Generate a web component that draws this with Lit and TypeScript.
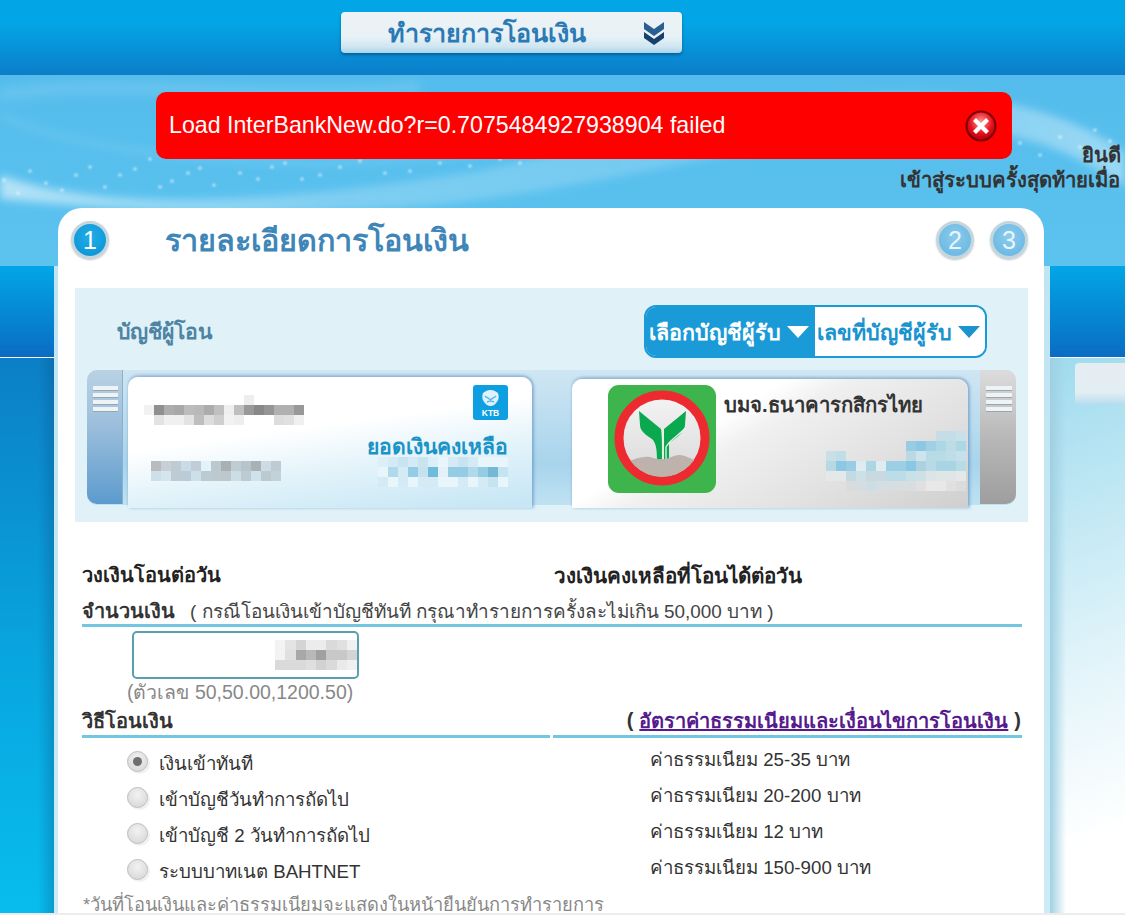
import { LitElement, html, css, svg } from "lit";
import { customElement, property } from "lit/decorators.js";

@customElement("pixel-blur")
class PixelBlur extends LitElement {
  @property({ type: Array }) rows: string[] = [];
  @property({ type: Number }) cell = 10;
  static styles = css`
    :host { display: block; }
    .grid { display: grid; }
    .px { display: block; }
  `;
  render() {
    const cols = this.rows[0]?.split(" ").length ?? 0;
    const cells = this.rows.flatMap((r) => r.split(" "));
    return html`<div class="grid" style="grid-template-columns:repeat(${cols},${this.cell}px);grid-auto-rows:10px">
      ${cells.map((c) => html`<span class="px" style="background:${c === "---" ? "transparent" : "#" + c}"></span>`)}
    </div>`;
  }
}

const chevrons = svg`<path d="M1 2 L11 9 L21 2 V9 L11 16 L1 9Z" fill="#2a5f92"/><path d="M1 12 L11 19 L21 12 V18 L11 25 L1 18Z" fill="#17416b"/>`;

const kbank = html`<svg class="kbank" viewBox="0 0 108 108" width="108" height="108">
  <defs>
    <linearGradient id="kb" x1="0" y1="0" x2="0" y2="1"><stop offset="0" stop-color="#f4f4f4"/><stop offset="1" stop-color="#d8d8d8"/></linearGradient>
    <clipPath id="kc"><circle cx="54" cy="53" r="39"/></clipPath>
  </defs>
  <rect width="108" height="108" rx="11" fill="#3db54c"/>
  <circle cx="54" cy="53" r="43" fill="url(#kb)" stroke="#ee2a31" stroke-width="9"/>
  <path d="M31 26 L53 44 C54 50 54 58 54 76 H49 C49 64 48 58 44 54 C38 50 32 46 32 40Z" fill="#0aa84f"/>
  <path d="M78 26 L56 44 V76 H61 V58 C66 54 77 48 77 40Z" fill="#0aa84f"/>
  <path d="M58 76 V62 C62 54 72 50 77 43" stroke="#e8f5e8" stroke-width="1.300" fill="none"/>
  <path d="M55 44 V76" stroke="#e8f5e8" stroke-width="1.300" fill="none"/>
  <path clip-path="url(#kc)" d="M15 78 C24 76 29 72 37 72 C43 71 47 75 54 74 C60 75 65 70 71 70 C78 70 84 75 93 77 V92 H15Z" fill="#bdb3ac"/>
</svg>`;

const ktb = html`<svg viewBox="0 0 35 35" width="35" height="35">
  <rect width="35" height="35" rx="3" fill="#0e9fe2"/>
  <path d="M17.5 5 C14 5 12 6.5 10 8 C9 11 9 14 10.500 16 C12 19 15 21 17.500 21 C20 21 23 19 24.500 16 C26 14 26 11 25 8 C23 6.500 21 5 17.500 5Z" fill="#dff2fb"/>
  <path d="M12 11 C14 13 16 13 17.500 15 C19 13 21 13 23 11 M14 17 C16 16 19 16 21 17" stroke="#58b8e6" stroke-width="1.400" fill="none"/>
  <text x="17.500" y="31" text-anchor="middle" font-family="Liberation Sans, sans-serif" font-size="8.500" font-weight="700" fill="#fff">KTB</text>
</svg>`;

const closeIcon = html`<svg viewBox="0 0 32 32" width="32" height="32">
  <defs><radialGradient id="cx" cx="0.5" cy="0.35" r="0.7"><stop offset="0" stop-color="#ff9a9a"/><stop offset="0.6" stop-color="#e8101a"/><stop offset="1" stop-color="#a80008"/></radialGradient></defs>
  <circle cx="16" cy="16" r="15.500" fill="#7a0005"/>
  <circle cx="16" cy="16" r="13.500" fill="url(#cx)"/>
  <path d="M11 8 L16 13 L21 8 L24 11 L19 16 L24 21 L21 24 L16 19 L11 24 L8 21 L13 16 L8 11Z" fill="#fff"/>
</svg>`;

const dots = [
  [4,105],[18,118],[30,96],[46,108],[62,115],[76,100],[90,92],[105,112],[120,100],[135,94],[150,84],[160,112],[172,106],[188,98],[200,93],[214,110],[225,78],[240,98],[258,104],[272,92],[285,88],[302,104],[320,100],[340,92],[360,86],[385,98],[410,96],[440,88],[470,91],[500,84],[520,88],[540,75],
  [1020,68],[1040,80],[1060,62],[1080,72],[1095,55],[1110,66],
];

const swoosh = html`<svg class="swoosh" viewBox="0 0 1125 191" width="1125" height="191">
  <defs>
    <linearGradient id="hz" x1="0" x2="1" y1="0" y2="0"><stop offset="0" stop-color="#fff" stop-opacity=".55"/><stop offset=".3" stop-color="#fff" stop-opacity=".22"/><stop offset=".7" stop-color="#fff" stop-opacity=".16"/><stop offset="1" stop-color="#fff" stop-opacity=".4"/></linearGradient>
    <filter id="sb" x="-5%" y="-20%" width="110%" height="140%"><feGaussianBlur stdDeviation="4"/></filter>
    <filter id="db"><feGaussianBlur stdDeviation=".8"/></filter>
  </defs>
  <g filter="url(#sb)">
    <path d="M0 100 C120 142 300 124 480 96 C640 60 760 24 880 20 C980 14 1070 36 1125 78 V112 C1060 64 980 46 880 54 C720 74 560 124 380 134 C220 144 90 132 0 124Z" fill="url(#hz)"/>
    <path d="M0 40 C60 70 200 90 340 88 C500 82 640 55 780 30" stroke="#fff" stroke-opacity=".2" stroke-width="3" fill="none"/>
    <path d="M0 20 C120 0 280 30 420 12" stroke="#fff" stroke-opacity=".1" stroke-width="14" fill="none"/>
  </g>
  <g fill="#fff" fill-opacity=".7" filter="url(#db)">
    ${dots.map(([x, y]) => svg`<circle cx=${x} cy=${y} r="1.600"/>`)}
  </g>
</svg>`;

const fees = ["ค่าธรรมเนียม 25-35 บาท", "ค่าธรรมเนียม 20-200 บาท", "ค่าธรรมเนียม 12 บาท", "ค่าธรรมเนียม 150-900 บาท"];
const methods = ["เงินเข้าทันที", "เข้าบัญชีวันทำการถัดไป", "เข้าบัญชี 2 วันทำการถัดไป", "ระบบบาทเนต BAHTNET"];

const M_NAME = [
  "--- --- --- --- --- --- --- --- --- --- eeeeee --- --- --- --- ---",
  "f2f2f2 8f8f8f adadad a8a8a8 bcbcbc b9b9b9 acacac c0c0c0 efefef bfbfbf 999999 888888 959595 b0b0b0 b0b0b0 989898",
  "--- e3e3e3 f0f0f0 f0f0f0 e3e3e3 bebebe dddddd cfcfcf f2f2f2 eeeeee --- --- --- dddddd e0e0e0 f0f0f0",
];
const M_ACC = [
  "b8bcbf c8d0d6 bfcbd2 cbdbe5 c0ccd6 e4f3fa bcc8d0 a8b0b4 c0ccd4 b8c4cc a8b2b4 ccdbe5 bfcbd4",
  "cddfe8 d3e6ee bccbd4 bcccd6 cddfe9 bccad2 bcc9cf bcc8ce cddde6 bccad1 cfe1ea bcc9d1 c3d1d8",
];
const M_BAL = [
  "dceef7 d4ebf5 c8e4f1 d4ebf5 c8e4f1 dceef7 e8f5fa d4ebf5 c8e4f1 d4ebf5 e8f5fa e8f5fa e8f5fa",
  "e8f5fa b0d9eb d4ebf5 94cce5 c4e2ef 6ebbdb e2f2f8 94cce5 94cce5 b0d9eb 94cce5 74b8d6 c4e4f1",
  "d4ebf5 e8f5fa d4ebf5 e8f5fa d4ebf5 d4ebf5 e8f5fa e8f5fa d4ebf5 e8f5fa d4ebf5 c6e3f0 e8f5fa",
];
const M_BANK = [
  "--- --- --- --- --- --- --- --- --- --- --- c4dde6 c4dde6 c8e0e8",
  "--- --- --- --- --- --- --- --- 99cce4 8cc8e4 a0d0e4 acd8e6 bcdce6 acd8e6",
  "c8dfe8 c0dde8 --- --- --- --- --- --- bcd8e2 cfe3ec b8dbe6 b8dbe6 bedde8 c4e0ea",
  "b8d8e4 8cc8e4 98cde4 dcecf0 acd6e6 e0ecf0 9ccee4 9ccee4 88c8e4 acd2e0 b8dae6 a8d4e4 a8d4e4 b8dce6",
  "e4e8e8 e4e8e8 c4dae2 cce0e6 c8dae0 c8dae0 bcdce8 bcdce8 c8e0e8 cce0e8 dce4e6 e0e6e6 e0e6e6 e4e8e8",
  "--- --- d8dcdc d4dee2 cddde2 d4dee2 d8dedf d8dedf d8dedf e0e0e0 e8e8e8 e8e8e8 e0e0e0 dcdcdc",
];
const M_INPUT = [
  "f3f3f3 e4e4e4 d4d4d4 ececec ececec dadada e0e0e0 f0f0f0",
  "f3f3f3 e0e0e0 a8a8a8 b8b8b8 a0a0a0 c8c8c8 c8c8c8 d4d4d4",
  "dadada dadada dadada dfdfdf d2d2d2 dadada eaeaea f0f0f0",
];

@customElement("app-root")
class AppRoot extends LitElement {
  static styles = css`
    :host {
      display: block; width: 1125px; height: 915px; overflow: hidden; position: relative;
      font-family: "Liberation Sans", Arial, sans-serif; color: #333;
      background:
        linear-gradient(#ececec, #ececec) 0 913px / 100% 2px no-repeat,
        linear-gradient(#bfe4f2, #cdebf5) 54px 266px / 4px 649px no-repeat,
        linear-gradient(#bfe4f2, #cdebf5) 1044px 266px / 6px 649px no-repeat,
        linear-gradient(90deg, transparent 70%, rgba(10, 70, 120, .28)) 0 358px / 54px 557px no-repeat,
        linear-gradient(#0c7fc6, #08a6e0 55%, #08bdee) 0 358px / 54px 557px no-repeat,
        linear-gradient(90deg, #9fd0e2, rgba(255,255,255,0) 16px) 1050px 358px / 75px 557px no-repeat,
        linear-gradient(160deg, #9fdbee, #e2f4fa 55%, #fff 85%) 1050px 358px / 75px 557px no-repeat,
        linear-gradient(#fff, #fff) 0 357px / 100% 2px no-repeat,
        linear-gradient(#02a6e6, #0a6cc4) 0 266px / 100% 91px no-repeat,
        linear-gradient(#54bcec, #5cc3ef) 0 75px / 100% 191px no-repeat;
    }
    .top {
      height: 75px; box-sizing: border-box; padding: 12px 0 0 341px;
      background: linear-gradient(#02a6e6 0, #02a6e6 30%, #0c7dc9 100%);
    }
    .menu {
      width: 341px; height: 41px; box-sizing: border-box; border-radius: 4px; padding: 0 17px 0 47px;
      display: flex; align-items: center; justify-content: space-between;
      background: linear-gradient(#edf3f7 0, #e8f1f5 60%, #cfe6f1 85%, #a9d4e8 100%);
      box-shadow: 0 2px 3px rgba(0, 40, 90, .45);
      font-size: 25.1px; font-weight: 700; color: #2b7ab5;
    }
    .menu svg { display: block; }
    .hero { position: relative; height: 133px; display: grid; }
    .swoosh { position: absolute; left: 0; top: 0; }
    .alert, .greet { grid-area: 1 / 1; position: relative; }
    .alert {
      margin: 17px 0 0 156px; width: 856px; height: 67px; box-sizing: border-box; padding: 0 15px 0 13px;
      background: #f00; border-radius: 10px; color: #fff; font-size: 23.2px;
      display: flex; align-items: center; justify-content: space-between;
    }
    .alert svg { display: block; }
    .greet { margin-top: 68px; font-size: 20.3px; font-weight: 700; color: #333; line-height: 25px; white-space: nowrap; }
    .greet div:nth-child(1) { padding-left: 1082px; }
    .greet div:nth-child(2) { padding-left: 900px; }
    .main { display: flex; align-items: flex-start; padding-left: 58px; }
    .card {
      flex: none; width: 986px; height: 705px; box-sizing: border-box; background: #fff;
      border-radius: 24px 24px 0 0; padding: 13px 16px 0 13px;
    }
    .steps { display: flex; align-items: center; height: 38px; }
    .step {
      width: 38px; height: 38px; box-sizing: border-box; border-radius: 50%; border: 3px solid #c3d6dd;
      display: flex; align-items: center; justify-content: center; flex: none;
      font-size: 25px; color: #e8f6fc;
      background: radial-gradient(circle at 50% 40%, #8ccbec, #62b4e2);
      box-shadow: 0 1px 2px rgba(0,0,0,.25);
    }
    .step.on { background: radial-gradient(circle at 50% 40%, #22aee8, #0890d4); color: #fff; }
    .step.two { margin-left: auto; }
    .step.three { margin-left: 16px; }
    .title { margin-left: 56px; font-size: 30.5px; font-weight: 700; color: #3f86b8; white-space: nowrap; }
    .panel { margin: 29px 0 0 4px; width: 953px; height: 234px; box-sizing: border-box; background: #e0f2f7; padding-top: 17px; }
    .pick { display: flex; align-items: center; height: 53px; padding-left: 42px; }
    .from { font-size: 21.2px; font-weight: 700; color: #4d84a4; }
    .seg {
      margin-left: auto; margin-right: 41px; width: 343px; height: 53px; box-sizing: border-box; display: flex;
      border: 2px solid #1a9ad6; border-radius: 12px; overflow: hidden; font-size: 21.5px; font-weight: 700;
    }
    .seg span { display: flex; align-items: center; gap: 6px; white-space: nowrap; }
    .seg .a { width: 169px; flex: none; background: #1a9ad6; color: #fff; padding-left: 3px; box-sizing: border-box; }
    .seg .b { flex: 1; background: #fff; color: #1a93cf; padding-left: 2px; }
    .tri { width: 0; height: 0; border: 11px solid transparent; border-bottom: 0; border-top: 12px solid currentColor; }
    .strip {
      margin: 12px 0 0 12px; width: 929px; height: 135px; display: flex; align-items: flex-start;
      background: linear-gradient(#cfe6f3, #a8d4ec 70%, #bfe2f2);
      border-radius: 10px;
    }
    .handle { width: 36px; height: 134px; flex: none; box-sizing: border-box; padding: 16px 4px 0 6px; }
    .handle.l { background: linear-gradient(#b9d2e4, #9dbfdc 40%, #5c9bce); border-radius: 10px 0 0 10px; border-right: 1px solid #8cb0c8; }
    .handle.r { background: linear-gradient(#dcdcdc, #b8b8b8 50%, #9e9e9e); border-radius: 0 10px 10px 0; margin-left: auto; }
    .handle i { display: block; height: 4px; margin-bottom: 2px; background: #eef3f6; border: solid #9aa6ad; border-width: 0 0 1px; }
    .acct {
      margin: 7px 0 0 5px; width: 404px; height: 131px; flex: none; box-sizing: border-box; border-radius: 10px 10px 0 0;
      background: linear-gradient(172deg, #fff 40%, #e3f3fa 65%, #c8e7f5 95%);
      box-shadow: 2px 0 3px rgba(90, 140, 190, .5), 0 -2px 3px rgba(90, 140, 190, .4);
      padding: 8px 24px 0 16px; display: flex; flex-direction: column;
    }
    .bank {
      margin: 9px 0 0 40px; width: 396px; height: 129px; flex: none; box-sizing: border-box; border-radius: 10px 10px 0 0;
      background: linear-gradient(150deg, #fff 35%, #f0f0f0 45%, #e2e2e2 70%, #cfcfcf 100%);
      box-shadow: 2px 0 3px rgba(90, 140, 190, .5), 0 -2px 3px rgba(90, 140, 190, .4);
      padding: 6px 2px 0 36px; display: flex; gap: 8px;
    }
    .ktb { align-self: flex-end; height: 35px; }
    .ktb svg { display: block; }
    .m1 { margin-top: -25px; }
    .bal { align-self: flex-end; margin-top: 10px; font-size: 21.1px; font-weight: 700; color: #1a93c6; line-height: 24px; position: relative; }
    .m4 { align-self: flex-end; margin-top: -2px; }
    .m2 { margin: -26px 0 0 7px; }
    .kbank { display: block; flex: none; }
    .bank-r { flex: 1; display: flex; flex-direction: column; }
    .bank-n { font-size: 20.3px; font-weight: 700; color: #333; line-height: 24px; margin-top: 8px; white-space: nowrap; }
    .m3 { align-self: flex-end; margin-top: 14px; }
    .form { margin: 0 0 0 11px; width: 940px; }
    .lim { display: flex; margin-top: 42px; height: 22px; align-items: center; font-weight: 700; color: #222; font-size: 20px; white-space: nowrap; }
    .lim span:last-child { margin-left: 214px; font-size: 20.6px; }
    .lim span:first-child { width: 258px; }
    .head { display: flex; align-items: center; border-bottom: 3px solid #73c6e0; height: 27px; margin-top: 11px; box-sizing: content-box; white-space: nowrap; }
    .head b { color: #333; font-size: 19.9px; }
    .head .note { margin-left: 15px; color: #444; font-size: 18.9px; }
    .amt { margin: 4px 0 0 50px; width: 227px; height: 48px; box-sizing: border-box; border: 2px solid #5a9fb0; border-radius: 5px; background: #fff; display: flex; justify-content: flex-end; align-items: center; }
    .hint { margin: 3px 0 0 45px; color: #888; line-height: 20px; font-size: 19.5px; white-space: nowrap; }
    .two-h { display: flex; gap: 3px; margin-top: 4px; font-size: 20px; white-space: nowrap; }
    .two-h > div { height: 29px; border-bottom: 3px solid #73c6e0; display: flex; align-items: center; }
    .two-h .w1 { width: 468px; font-weight: 700; }
    .two-h .w2 { flex: 1; justify-content: flex-end; font-weight: 700; padding-right: 1px; }
    .two-h a { color: #551a8b; text-decoration: underline; margin: 0 6px; }
    .opts { display: grid; grid-template-columns: 523px 1fr; grid-auto-rows: 36px; margin: 13px 0 0 45px; font-size: 18.7px; white-space: nowrap; }
    .opt { display: flex; align-items: flex-start; gap: 11px; color: #333; line-height: 22px; }
    .opt span { margin-top: 2px; }
    .radio { width: 21px; height: 21px; box-sizing: border-box; border-radius: 50%; flex: none; border: 1px solid #bcbcbc; background: radial-gradient(circle at 50% 35%, #f2f2f2, #d4d4d4); display: flex; align-items: center; justify-content: center; box-shadow: 2px 2px 1px #f0f0f0; }
    .radio i { width: 9px; height: 9px; border-radius: 50%; background: #6f6f6f; }
    .fee { line-height: 22px; margin-top: -2px; color: #333; }
    .foot { margin: -1px 0 0 1px; color: #888; line-height: 22px; font-size: 18.27px; white-space: nowrap; }
    .tab {
      flex: none; width: 50px; height: 42px; margin: 155px 0 0 31px; box-sizing: border-box; border-radius: 4px 0 0 4px;
      background: linear-gradient(#e6edf1, #e2eef3 70%, #b4dcef 100%);
    }
  `;

  render() {
    return html`
      <div class="top">
        <div class="menu"><span>ทำรายการโอนเงิน</span><svg viewBox="0 0 22 26" width="22" height="26">${chevrons}</svg></div>
      </div>
      <div class="hero">
        ${swoosh}
        <div class="alert"><span>Load InterBankNew.do?r=0.7075484927938904 failed</span>${closeIcon}</div>
        <div class="greet"><div>ยินดี</div><div>เข้าสู่ระบบครั้งสุดท้ายเมื่อ</div></div>
      </div>
      <div class="main">
        <div class="card">
          <div class="steps">
            <div class="step on">1</div>
            <div class="title">รายละเอียดการโอนเงิน</div>
            <div class="step two">2</div>
            <div class="step three">3</div>
          </div>
          <div class="panel">
            <div class="pick">
              <div class="from">บัญชีผู้โอน</div>
              <div class="seg">
                <span class="a">เลือกบัญชีผู้รับ <i class="tri"></i></span>
                <span class="b">เลขที่บัญชีผู้รับ <i class="tri"></i></span>
              </div>
            </div>
            <div class="strip">
              <div class="handle l"><i></i><i></i><i></i><i></i></div>
              <div class="acct">
                <div class="ktb">${ktb}</div>
                <pixel-blur class="m1" .rows=${M_NAME}></pixel-blur>
                <div class="bal">ยอดเงินคงเหลือ</div>
                <pixel-blur class="m4" .rows=${M_BAL}></pixel-blur>
                <pixel-blur class="m2" .rows=${M_ACC}></pixel-blur>
              </div>
              <div class="bank">
                ${kbank}
                <div class="bank-r">
                  <div class="bank-n">บมจ.ธนาคารกสิกรไทย</div>
                  <pixel-blur class="m3" .rows=${M_BANK}></pixel-blur>
                </div>
              </div>
              <div class="handle r"><i></i><i></i><i></i><i></i></div>
            </div>
          </div>
          <div class="form">
            <div class="lim"><span>วงเงินโอนต่อวัน</span><span>วงเงินคงเหลือที่โอนได้ต่อวัน</span></div>
            <div class="head"><b>จำนวนเงิน</b><span class="note">( กรณีโอนเงินเข้าบัญชีทันที กรุณาทำรายการครั้งละไม่เกิน 50,000 บาท )</span></div>
            <div class="amt"><pixel-blur .rows=${M_INPUT} .cell=${10.25}></pixel-blur></div>
            <div class="hint">(ตัวเลข 50,50.00,1200.50)</div>
            <div class="two-h">
              <div class="w1">วิธีโอนเงิน</div>
              <div class="w2">( <a href="#">อัตราค่าธรรมเนียมและเงื่อนไขการโอนเงิน</a> )</div>
            </div>
            <div class="opts">
              ${methods.map(
                (m, i) => html`
                  <div class="opt"><div class="radio">${i === 0 ? html`<i></i>` : ""}</div><span>${m}</span></div>
                  <div class="fee">${fees[i]}</div>
                `
              )}
            </div>
            <div class="foot">*วันที่โอนเงินและค่าธรรมเนียมจะแสดงในหน้ายืนยันการทำรายการ</div>
          </div>
        </div>
        <div class="tab"></div>
      </div>
    `;
  }
}
